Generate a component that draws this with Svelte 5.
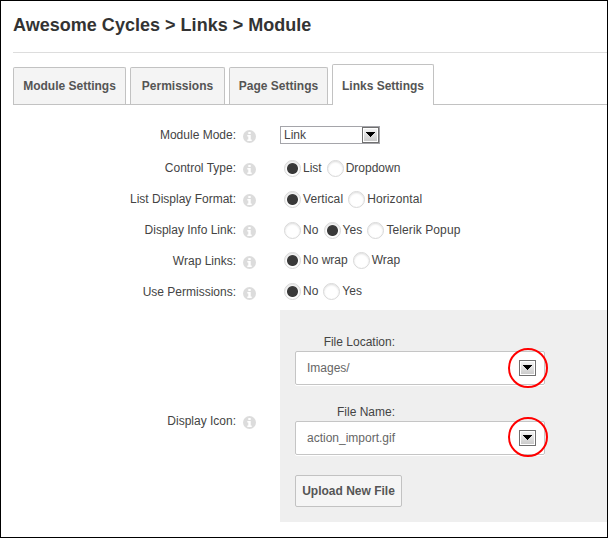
<script>
  const tabs = ['Module Settings', 'Permissions', 'Page Settings', 'Links Settings'];
  const widths = [113, 95, 99, 102];
  const rows = [
    { label: 'Control Type:', options: ['List', 'Dropdown'], on: 0 },
    { label: 'List Display Format:', options: ['Vertical', 'Horizontal'], on: 0, wide: true },
    { label: 'Display Info Link:', options: ['No', 'Yes', 'Telerik Popup'], on: 1, wide: true },
    { label: 'Wrap Links:', options: ['No wrap', 'Wrap'], on: 0, lifted: true },
    { label: 'Use Permissions:', options: ['No', 'Yes'], on: 0, lifted: true }
  ];
  const files = [
    { label: 'File Location:', value: 'Images/' },
    { label: 'File Name:', value: 'action_import.gif' }
  ];
</script>

{#snippet info()}
  <svg class="info" width="13" height="13" viewBox="0 0 13 13">
    <circle cx="6.5" cy="6.5" r="6.5" fill="#dcdcdc" />
    <path d="M5.300 2h2.400v2h-2.400zM4.300 5h3.400v4.500h1V11H4.300V9.500h1v-3h-1z" fill="#fff" />
  </svg>
{/snippet}

{#snippet arrow()}
  <svg class="arrow" width="17" height="16" viewBox="0 0 17 16">
    <defs>
      <linearGradient id="face" x1="0" y1="0" x2="0" y2="1">
        <stop offset="0" stop-color="#f3f3f3" />
        <stop offset="1" stop-color="#cbcbcb" />
      </linearGradient>
    </defs>
    <rect x=".5" y=".5" width="16" height="15" fill="#fff" stroke="#707070" />
    <rect x="2" y="2" width="13" height="12" fill="url(#face)" />
    <path d="M4 5h9v1h-1v1h-1v1h-1v1H9v1H8V9H7V8H6V7H5V6H4z" fill="#000" />
  </svg>
{/snippet}

<main>
  <h1>Awesome Cycles &gt; Links &gt; Module</h1>
  <nav>
    {#each tabs as tab, i}
      <div class="tab" class:active={i === 3} style:width="{widths[i]}px"><span>{tab}</span></div>
    {/each}
  </nav>
  <div class="row mode">
    <span class="label">Module Mode:</span>
    {@render info()}
    <div class="select"><span>Link</span>{@render arrow()}</div>
  </div>
  {#each rows as row, r}
    <div class="row radio-row" class:last={r === 4}>
      <span class="label">{row.label}</span>
      {@render info()}
      <div class="options" class:wide={row.wide} class:lifted={row.lifted}>
        {#each row.options as option, i}
          <div class="option"><i class:on={row.on === i}></i><span>{option}</span></div>
        {/each}
      </div>
    </div>
  {/each}
  <div class="row icon-row">
    <span class="label">Display Icon:</span>
    {@render info()}
    <section>
      {#each files as file, i}
        <div class="file">
          <div class="caption">{file.label}</div>
          <div class="field">
            <span>{file.value}</span>
            {@render arrow()}
            <b class="ring" class:second={i === 1}></b>
          </div>
        </div>
      {/each}
      <button>Upload New File</button>
    </section>
  </div>
</main>

<style>
  :global(body) { margin: 0; }
  main {
    box-sizing: border-box;
    width: 608px;
    height: 538px;
    border: 1px solid #000;
    background: #fff;
    padding-left: 12px;
    font: 12px/16px "Liberation Sans", Arial, sans-serif;
    color: #444;
    overflow: hidden;
  }
  h1 {
    margin: 0;
    height: 51px;
    border-bottom: 1px solid #ddd;
    font-size: 18px;
    line-height: 48px;
    letter-spacing: 0.02px;
    color: #333;
    white-space: nowrap;
  }
  nav {
    display: flex;
    align-items: flex-end;
    gap: 4px;
    height: 52px;
    border-bottom: 1px solid #c2c2c2;
    box-sizing: border-box;
  }
  .tab {
    box-sizing: border-box;
    height: 37px;
    border: 1px solid #c2c2c2;
    border-bottom: 0;
    border-radius: 2px 2px 0 0;
    background: #f4f4f4;
    line-height: 36px;
    font-weight: bold;
    color: #555;
    text-align: center;
    white-space: nowrap;
  }
  .tab.active {
    height: 41px;
    background: #fff;
    line-height: 42px;
    margin-bottom: -1px;
  }
  .row { display: flex; height: 31px; }
  .mode { margin-top: 21px; height: 34px; }
  .label {
    width: 223px;
    text-align: right;
    padding-top: 1px;
    white-space: nowrap;
  }
  .info { flex: none; margin: 4px 0 0 7px; }
  .radio-row .label { padding-top: 0; }
  .radio-row .info { margin-top: 3px; }
  .select {
    box-sizing: border-box;
    display: flex;
    justify-content: space-between;
    width: 100px;
    height: 18px;
    margin-left: 24px;
    border: 1px solid #a5a5aa;
    padding-left: 3px;
  }
  .options { display: flex; gap: 5px; margin: 0 0 0 28px; }
  .options.wide { letter-spacing: 0.1px; }
  .options.lifted { margin-top: -1px; }
  .option { display: flex; gap: 2px; }
  .option span { white-space: nowrap; }
  i {
    box-sizing: border-box;
    width: 17px;
    height: 17px;
    border: 1px solid #d8d8d8;
    border-radius: 50%;
    background: #fff;
    box-shadow: inset 0 1px 2px #ddd;
  }
  i.on { background: radial-gradient(circle at 50% 50%, #393939 5px, #fff 6px); }
  .icon-row { height: 212px; align-items: flex-start; }
  .row.last { height: 26px; }
  .icon-row .label { padding-top: 103px; }
  .icon-row .info { margin-top: 106px; }
  section {
    box-sizing: border-box;
    width: 327px;
    height: 212px;
    margin-left: 24px;
    padding: 24px 0 0 15px;
    background: #efefef;
  }
  .file { height: 70px; }
  .caption { width: 100px; height: 17px; text-align: right; white-space: nowrap; }
  .field {
    position: relative;
    display: flex;
    justify-content: space-between;
    box-sizing: border-box;
    width: 250px;
    height: 34px;
    border: 1px solid #c5c5c5;
    border-radius: 2px;
    background: #fff;
    box-shadow: 0 1px 0 #fff;
    padding: 8px 8px 0 11px;
    color: #666;
  }
  .ring {
    position: absolute;
    left: 212px;
    top: -4px;
    width: 36px;
    height: 36px;
    border: 2px solid #f00;
    border-radius: 50%;
  }
  .ring.second { top: -5px; }
  button {
    box-sizing: border-box;
    display: block;
    width: 107px;
    height: 32px;
    margin: 1px 0 0;
    border: 1px solid #c2c2c2;
    border-radius: 2px;
    background: #f5f5f5;
    padding: 0;
    font: bold 12px/30px "Liberation Sans", Arial, sans-serif;
    color: #555;
    white-space: nowrap;
  }
</style>
